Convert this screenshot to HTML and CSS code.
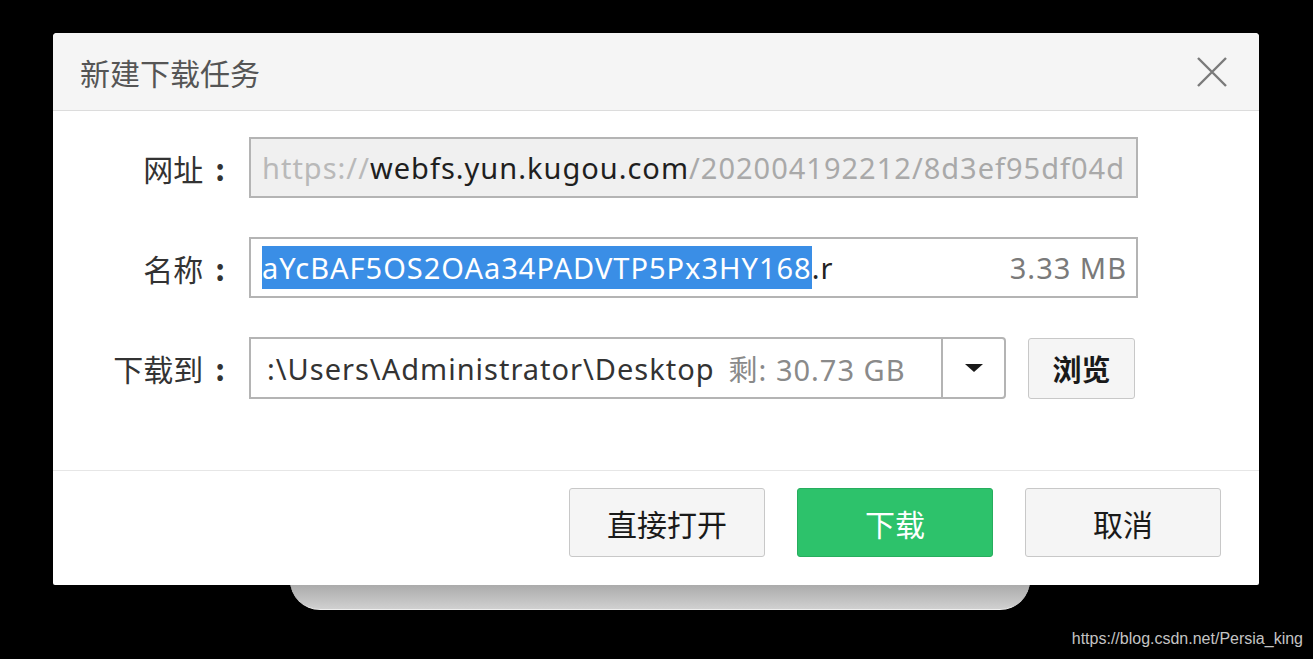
FILE: index.html
```html
<!DOCTYPE html>
<html lang="zh-CN">
<head>
    <meta charset="UTF-8">
    <title>新建下载任务</title>
    <link rel="stylesheet" href="styles.css">
</head>
<body>
    <div class="dialog-shadow"></div>
    <div class="dialog">
        <div class="dialog-header">
            <span class="dialog-title">新建下载任务</span>
            <svg class="close-btn" width="32" height="32" viewBox="0 0 32 32">
                <path d="M2 2 L30 30 M30 2 L2 30" stroke="#7a7a7a" stroke-width="2.4" fill="none"/>
            </svg>
        </div>
        <div class="dialog-body">
            <div class="row">
                <label class="row-label">网址<span class="colon">:</span></label>
                <div class="field field-disabled">
                    <span class="muted-light">https://</span><span class="strong">webfs.yun.kugou.com</span><span class="muted">/202004192212/8d3ef95df04d</span>
                </div>
            </div>
            <div class="row">
                <label class="row-label">名称<span class="colon">:</span></label>
                <div class="field">
                    <span class="name-text"><span class="selected">aYcBAF5OS2OAa34PADVTP5Px3HY168</span>.r</span>
                    <span class="size">3.33 MB</span>
                </div>
            </div>
            <div class="row">
                <label class="row-label">下载到<span class="colon">:</span></label>
                <div class="combo">
                    <div class="combo-text">:\Users\Administrator\Desktop <span class="free">剩: 30.73 GB</span></div>
                    <div class="combo-arrow">
                        <svg width="20" height="10" viewBox="0 0 20 10"><path d="M1 1 L19 1 L10 9 Z" fill="#1a1a1a"/></svg>
                    </div>
                </div>
                <button class="btn btn-browse">浏览</button>
            </div>
        </div>
        <div class="dialog-footer">
            <button class="btn btn-big">直接打开</button>
            <button class="btn btn-big btn-green">下载</button>
            <button class="btn btn-big">取消</button>
        </div>
    </div>
    <div class="watermark">https://blog.csdn.net/Persia_king</div>
</body>
</html>
```

FILE: styles.css
```css
body {
    margin: 0;
    padding: 33px 0 0 53px;
    background: #000;
    height: 100vh;
    box-sizing: border-box;
    position: relative;
    overflow: hidden;
    font-family: "Noto Sans", "Noto Sans CJK SC", sans-serif;
}
.dialog {
    position: relative;
    width: 1206px;
    background: #fff;
    border-radius: 4px 4px 2px 2px;
    z-index: 2;
}
.dialog-header {
    height: 77px;
    display: flex;
    align-items: center;
    justify-content: space-between;
    padding: 0 31px 0 27px;
    background: #f5f5f5;
    border-bottom: 1px solid #dcdcdc;
    border-radius: 4px 4px 0 0;
}
.dialog-title {
    font-family: "Noto Sans CJK SC", sans-serif;
    font-size: 30px;
    color: #555;
}
.close-btn {
    display: block;
}
.dialog-body {
    padding: 26px 0 71px 0;
    display: flex;
    flex-direction: column;
    gap: 39px;
}
.row {
    display: flex;
    align-items: center;
}
.row-label {
    width: 196px;
    box-sizing: border-box;
    padding-right: 24px;
    text-align: right;
    font-family: "Noto Sans CJK SC", sans-serif;
    font-size: 30px;
    color: #333;
}
.colon {
    margin-left: 12px;
    font-weight: bold;
}
.field {
    width: 889px;
    height: 61px;
    box-sizing: border-box;
    border: 2px solid #b4b4b4;
    display: flex;
    align-items: center;
    padding: 0 9px 0 11px;
    font-size: 29px;
    letter-spacing: 1px;
    white-space: nowrap;
    overflow: hidden;
}
.field-disabled {
    background: #f0f0f0;
}
.muted-light {
    color: #b9b9b9;
}
.muted {
    color: #a9a9a9;
}
.strong {
    color: #1f1f1f;
}
.name-text {
    flex: 1;
    color: #222;
}
.selected {
    background: #3a8ee6;
    color: #fff;
    padding: 2px 0;
}
.size {
    color: #7a7a7a;
}
.combo {
    width: 757px;
    height: 62px;
    box-sizing: border-box;
    border: 2px solid #b4b4b4;
    border-radius: 0 4px 4px 0;
    display: flex;
}
.combo-text {
    flex: 1;
    display: flex;
    align-items: center;
    padding-left: 16px;
    font-size: 29px;
    letter-spacing: 1px;
    color: #333;
    white-space: nowrap;
    overflow: hidden;
}
.free {
    color: #8a8a8a;
    margin-left: 14px;
}
.combo-arrow {
    width: 61px;
    border-left: 2px solid #b4b4b4;
    display: flex;
    align-items: center;
    justify-content: center;
}
.btn {
    font-family: "Noto Sans CJK SC", sans-serif;
    background: #f5f5f5;
    border: 1px solid #c8c8c8;
    border-radius: 3px;
    color: #1a1a1a;
    cursor: pointer;
}
.btn-browse {
    width: 107px;
    height: 61px;
    margin-left: 22px;
    font-size: 29px;
    font-weight: bold;
}
.dialog-footer {
    border-top: 1px solid #e6e6e6;
    padding: 17px 38px 28px 0;
    display: flex;
    justify-content: flex-end;
    gap: 32px;
}
.btn-big {
    width: 196px;
    height: 69px;
    font-size: 30px;
}
.btn-green {
    background: #2dc26b;
    border-color: #27ad5e;
    color: #fff;
}
.dialog-shadow {
    position: absolute;
    left: 290px;
    top: 580px;
    width: 740px;
    height: 29px;
    background: linear-gradient(#a3a3a3, #d0d0d0);
    border-bottom: 1px solid #eee;
    border-radius: 0 0 30px 30px;
    z-index: 1;
}
.watermark {
    position: absolute;
    right: 10px;
    bottom: 11px;
    font-family: "Liberation Sans", Arial, sans-serif;
    font-size: 16px;
    color: #c4c4c4;
}
```
